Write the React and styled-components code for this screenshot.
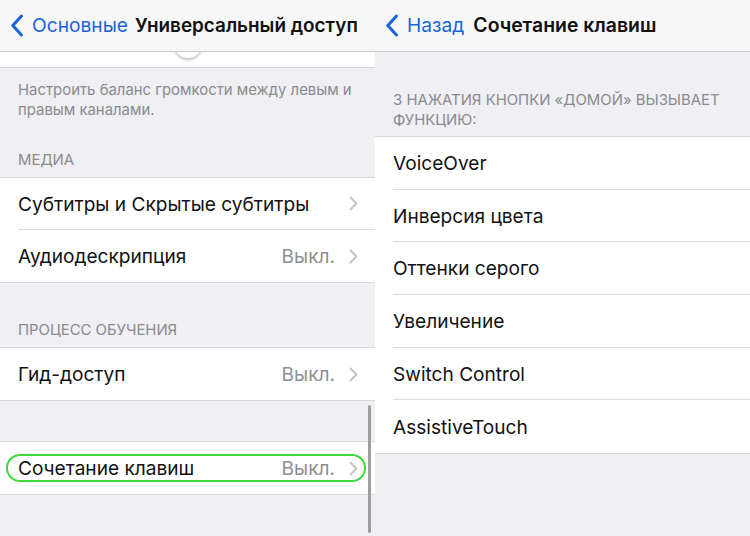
import React from 'react';
import styled, { createGlobalStyle } from 'styled-components';

const GlobalStyle = createGlobalStyle`
  html, body {
    margin: 0;
    padding: 0;
    background: #efeff4;
  }
  body {
    font-family: Inter, "Noto Sans", "Liberation Sans", sans-serif;
    -webkit-font-smoothing: antialiased;
  }
`;

const Page = styled.div`
  width: 750px;
  height: 536px;
  display: flex;
  flex-direction: row;
  overflow: hidden;
`;

const Screen = styled.div`
  position: relative;
  width: 375px;
  height: 536px;
  background: #efeff4;
  overflow: hidden;
  display: flex;
  flex-direction: column;
`;

const NavBar = styled.div`
  height: 52px;
  flex-shrink: 0;
  display: flex;
  align-items: center;
  background: #f7f7f8;
  border-bottom: 1px solid #c8c7cc;
  padding-left: 10px;
  padding-bottom: 1px;
  box-sizing: border-box;
`;

const BackButton = styled.div`
  display: flex;
  align-items: center;
  gap: 8px;
  color: #1a64db;
  font-size: 19.2px;
  margin-right: ${p => p.$gap}px;
`;

const Title = styled.div`
  font-size: ${p => p.$size}px;
  font-weight: 600;
  color: #111;
  white-space: nowrap;
`;

const SliderStrip = styled.div`
  position: relative;
  height: 15px;
  background: #fff;
  border-bottom: 1px solid #d6d6da;
  overflow: hidden;
`;

const Knob = styled.div`
  position: absolute;
  left: 174px;
  top: -22px;
  width: 28px;
  height: 28px;
  border-radius: 50%;
  background: #fff;
  box-shadow: 0 2px 3px rgba(0, 0, 0, 0.25);
`;

const Footer = styled.div`
  padding: 12px 18px 0 18px;
  font-size: 14.9px;
  line-height: 20px;
  color: #8a8a8f;
  height: ${p => p.$h}px;
  box-sizing: border-box;
`;

const SectionHeader = styled.div`
  height: ${p => p.$h}px;
  box-sizing: border-box;
  display: flex;
  align-items: flex-end;
  padding: 0 18px ${p => p.$pb}px 18px;
  font-size: 14.9px;
  line-height: 20px;
  color: #8a8a8f;
  text-transform: uppercase;
`;

const Spacer = styled.div`
  height: ${p => p.$h}px;
  flex-shrink: 0;
`;

const Group = styled.div`
  background: #fff;
  border-top: 1px solid #d9d9dd;
  border-bottom: 1px solid #d9d9dd;
  flex-shrink: 0;
`;

const RowWrap = styled.div`
  position: relative;
  height: ${p => p.$h}px;
  padding-left: ${p => p.$inset}px;
  box-sizing: border-box;
`;

const RowInner = styled.div`
  height: 100%;
  display: flex;
  align-items: center;
  padding-right: 17px;
  box-sizing: border-box;
  border-bottom: ${p => (p.$last ? 'none' : '1px solid #dcdce0')};
`;

const Label = styled.div`
  flex: 1;
  font-size: 19.1px;
  color: #111;
  white-space: nowrap;
`;

const Detail = styled.div`
  font-size: 19.1px;
  color: #8e8e93;
  margin-right: 14px;
`;

const Highlight = styled.div`
  position: absolute;
  left: 6px;
  right: 9px;
  top: 12px;
  bottom: 12px;
  border: 2px solid #3fd83c;
  border-radius: 14px;
  pointer-events: none;
`;

const ScrollIndicator = styled.div`
  position: absolute;
  left: 368px;
  top: 405px;
  width: 3px;
  height: 128px;
  border-radius: 2px;
  background: #9d9d9f;
`;

const BackChevron = () => (
  <svg width="14" height="23" viewBox="0 0 14 23">
    <path d="M11.5 2 L2.8 11.5 L11.5 21" fill="none" stroke="#1a64db" strokeWidth="3" strokeLinecap="round" strokeLinejoin="round" />
  </svg>
);

const Chevron = () => (
  <svg width="9" height="15" viewBox="0 0 9 15">
    <path d="M1.5 1.5 L7.5 7.5 L1.5 13.5" fill="none" stroke="#c4c4c8" strokeWidth="2" strokeLinecap="round" strokeLinejoin="round" />
  </svg>
);

const Row = ({ label, detail, chevron, last, highlight, h = 52, inset = 18 }) => (
  <RowWrap $h={h} $inset={inset}>
    <RowInner $last={last}>
      <Label>{label}</Label>
      {detail && <Detail>{detail}</Detail>}
      {chevron && <Chevron />}
    </RowInner>
    {highlight && <Highlight />}
  </RowWrap>
);

const shortcuts = [
  'VoiceOver',
  'Инверсия цвета',
  'Оттенки серого',
  'Увеличение',
  'Switch Control',
  'AssistiveTouch',
];

const App = () => (
  <>
    <GlobalStyle />
    <Page>
      <Screen>
        <NavBar>
          <BackButton $gap={7}>
            <BackChevron />
            Основные
          </BackButton>
          <Title $size={18.9}>Универсальный доступ</Title>
        </NavBar>
        <SliderStrip>
          <Knob />
        </SliderStrip>
        <Footer $h={79}>
          Настроить баланс громкости между левым и правым каналами.
        </Footer>
        <SectionHeader $h={30} $pb={7}>Медиа</SectionHeader>
        <Group>
          <Row label="Субтитры и Скрытые субтитры" chevron />
          <Row label="Аудиодескрипция" detail="Выкл." chevron last />
        </Group>
        <SectionHeader $h={64} $pb={7}>Процесс обучения</SectionHeader>
        <Group>
          <Row label="Гид-доступ" detail="Выкл." chevron last />
        </Group>
        <Spacer $h={40} />
        <Group>
          <Row label="Сочетание клавиш" detail="Выкл." chevron last highlight />
        </Group>
        <ScrollIndicator />
      </Screen>
      <Screen>
        <NavBar>
          <BackButton $gap={9}>
            <BackChevron />
            Назад
          </BackButton>
          <Title $size={19.4}>Сочетание клавиш</Title>
        </NavBar>
        <SectionHeader $h={84} $pb={6}>
          3 нажатия кнопки «Домой» вызывает функцию:
        </SectionHeader>
        <Group>
          {shortcuts.map((s, i) => (
            <Row key={s} label={s} h={52.7} last={i === shortcuts.length - 1} />
          ))}
        </Group>
      </Screen>
    </Page>
  </>
);

export default App;
